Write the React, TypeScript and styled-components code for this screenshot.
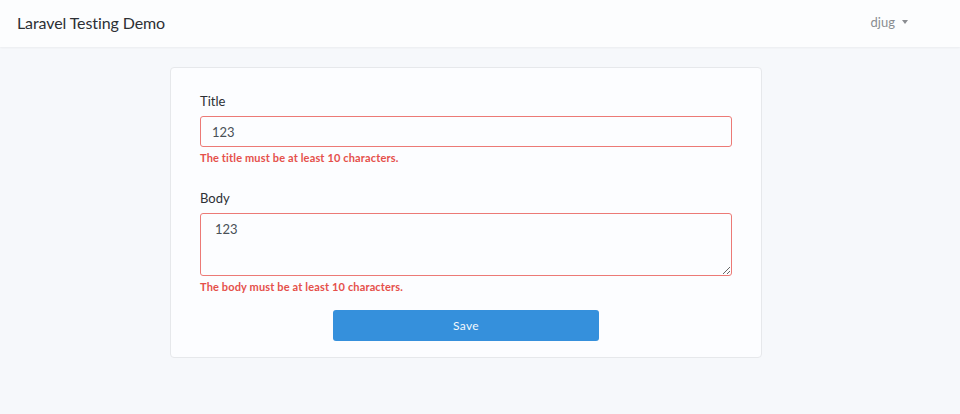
import React from "react";
import styled, { createGlobalStyle } from "styled-components";

const Global = createGlobalStyle`
  html, body { margin: 0; padding: 0; }
  body {
    background: #f6f8fb;
    font-family: Lato, "Noto Sans", sans-serif;
    color: #212529;
    min-height: 414px;
  }
`;

const Navbar = styled.nav`
  height: 47px;
  background: #fcfdfe;
  box-shadow: 0 1px 2px rgba(0, 0, 0, 0.05);
  display: flex;
  align-items: center;
  justify-content: space-between;
  padding: 0 52px 0 17px;
`;

const Brand = styled.div`
  font-size: 16px;
  color: #2d3035;
  letter-spacing: -0.1px;
  margin-top: -2px;
`;

const UserMenu = styled.div`
  display: flex;
  align-items: center;
  gap: 7px;
  font-size: 13px;
  color: #8a8d91;
  margin-top: -4px;
`;

const Caret = styled.span`
  width: 0;
  height: 0;
  border-left: 3.5px solid transparent;
  border-right: 3.5px solid transparent;
  border-top: 4px solid #8a8d91;
  margin-top: 1px;
`;

const Main = styled.main`
  padding: 20px 0 0 170px;
`;

const Card = styled.form`
  background: #fcfdff;
  border: 1px solid #e6e8eb;
  border-radius: 4px;
  padding: 24px 29px 16px;
  box-sizing: content-box;
  width: 532px;
`;

const Group = styled.div<{ $gap?: number }>`
  display: flex;
  flex-direction: column;
  margin-bottom: ${(p) => p.$gap ?? 0}px;
`;

const Label = styled.label`
  font-size: 13px;
  line-height: 18px;
  color: #2d3035;
  margin-bottom: 6px;
`;

const Input = styled.input`
  box-sizing: border-box;
  height: 31px;
  width: 100%;
  border: 1px solid #ec7a76;
  border-radius: 3px;
  background: #fcfdff;
  padding: 0 11px;
  font-family: Lato, "Noto Sans", sans-serif;
  font-size: 13px;
  color: #495057;
  outline: none;
`;

const TextArea = styled.textarea`
  box-sizing: border-box;
  height: 63px;
  width: 100%;
  border: 1px solid #ec7a76;
  border-radius: 3px;
  background: #fcfdff;
  padding: 7px 14px;
  font-family: Lato, "Noto Sans", sans-serif;
  font-size: 13px;
  color: #495057;
  outline: none;
  display: block;
`;

const Error = styled.div`
  font-size: 11px;
  font-weight: 700;
  color: #e5504b;
  margin-top: 4px;
  line-height: 14px;
  letter-spacing: 0.15px;
`;

const Actions = styled.div`
  display: flex;
  justify-content: center;
  margin-top: 16px;
`;

const Button = styled.button`
  width: 266px;
  height: 31px;
  background: #3590dc;
  border: none;
  border-radius: 3px;
  color: #f3f8fd;
  font-family: Lato, "Noto Sans", sans-serif;
  font-size: 12px;
  letter-spacing: 0.3px;
`;

export default function App() {
  return (
    <>
      <Global />
      <Navbar>
        <Brand>Laravel Testing Demo</Brand>
        <UserMenu>
          djug <Caret />
        </UserMenu>
      </Navbar>
      <Main>
        <Card onSubmit={(e) => e.preventDefault()}>
          <Group $gap={24}>
            <Label>Title</Label>
            <Input defaultValue="123" />
            <Error>The title must be at least 10 characters.</Error>
          </Group>
          <Group>
            <Label>Body</Label>
            <TextArea defaultValue="123" />
            <Error>The body must be at least 10 characters.</Error>
          </Group>
          <Actions>
            <Button type="submit">Save</Button>
          </Actions>
        </Card>
      </Main>
    </>
  );
}
